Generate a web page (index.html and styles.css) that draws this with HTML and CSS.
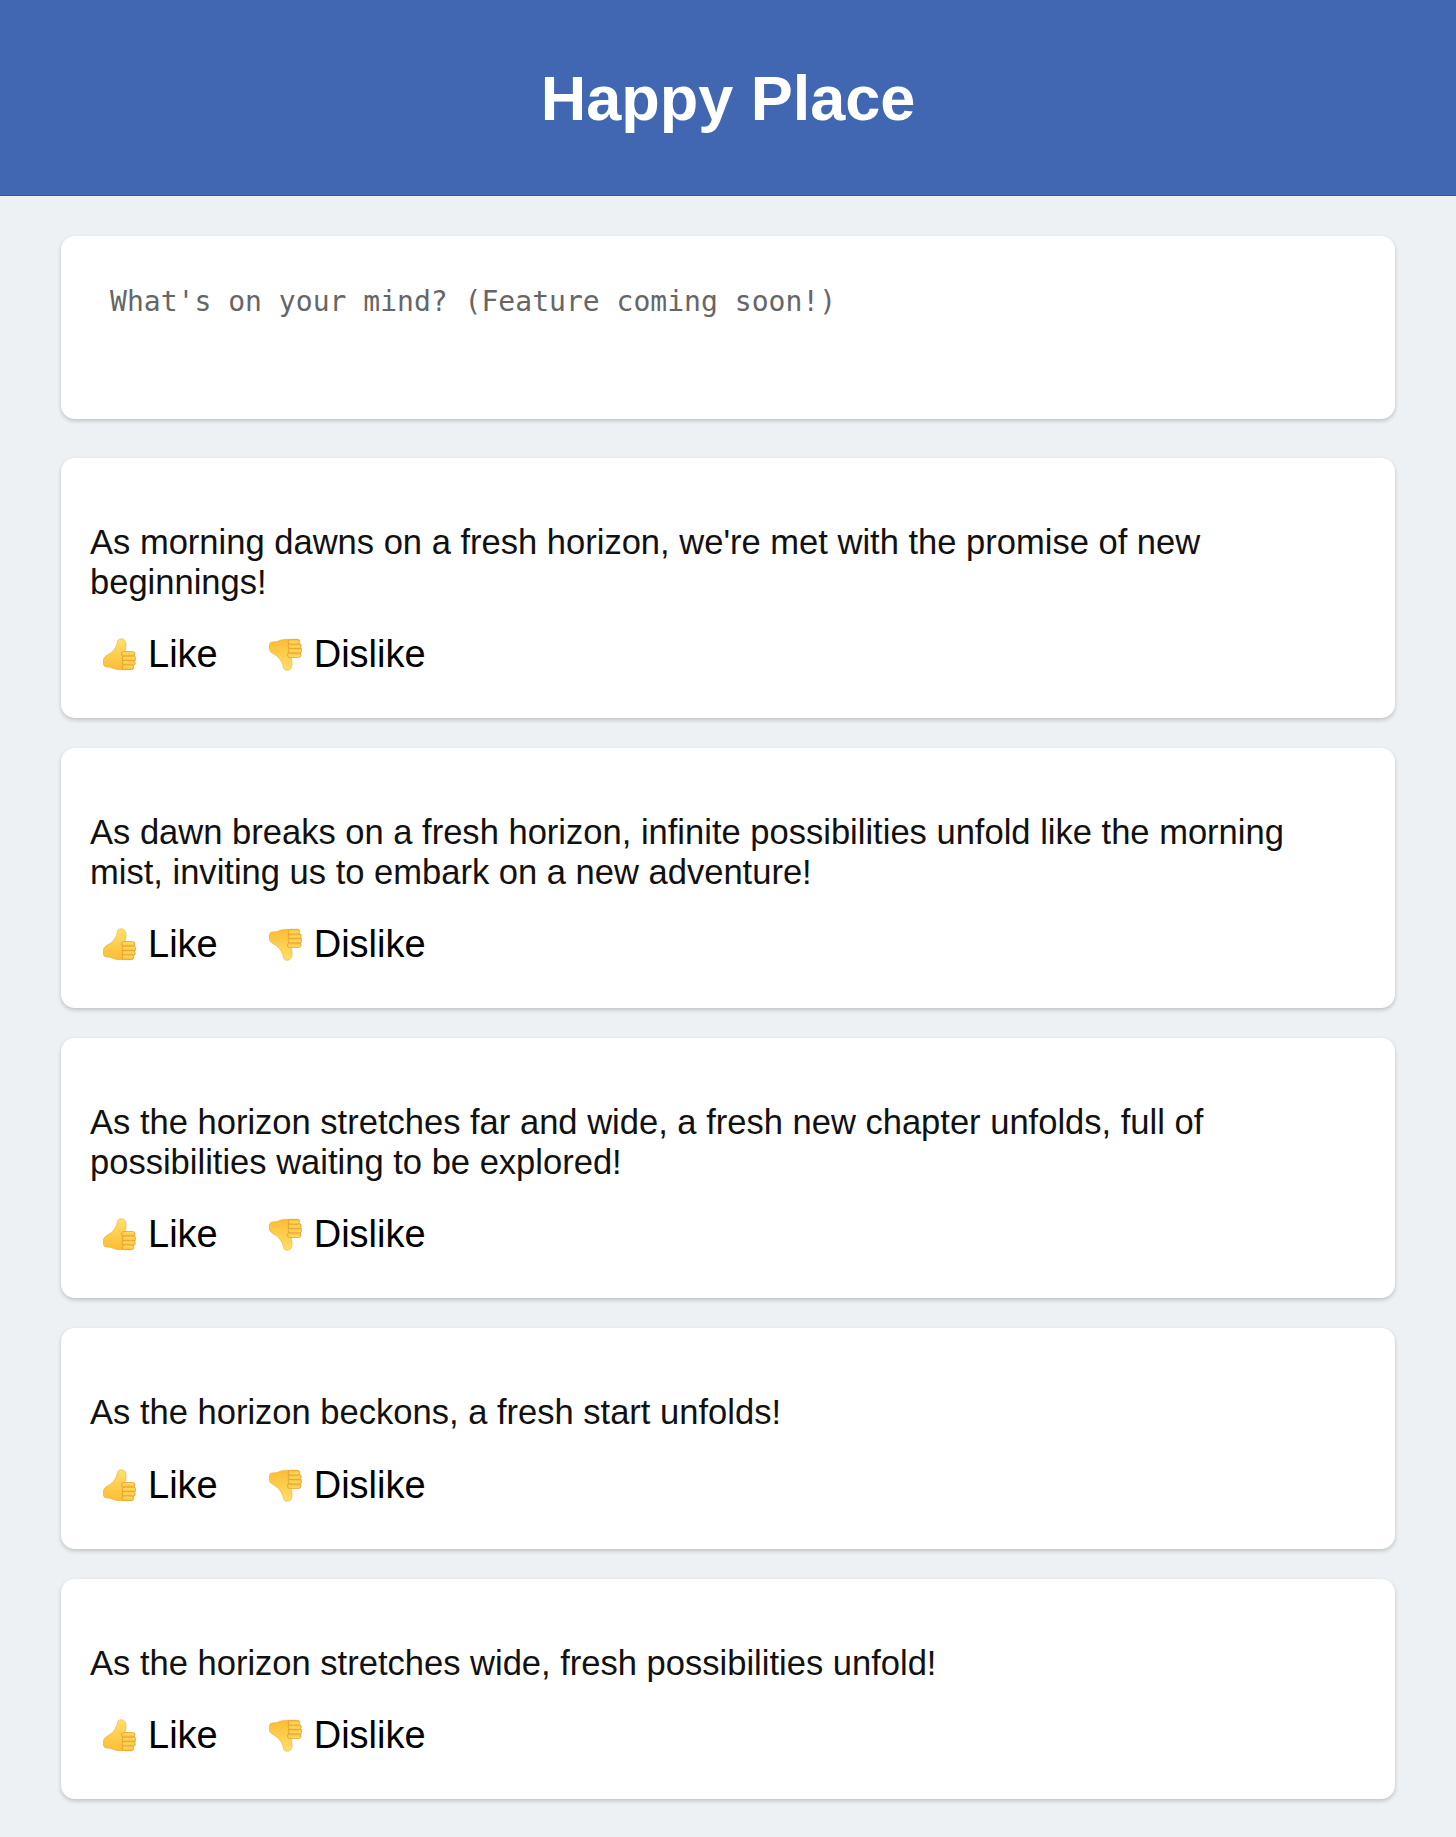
FILE: index.html
```html
<!DOCTYPE html>
<html lang="en">
<head>
    <meta charset="UTF-8">
    <meta name="viewport" content="width=device-width, initial-scale=1.0">
    <title>Happy Place</title>
    <link rel="stylesheet" href="styles.css">
</head>
<body>
    <svg class="sprite" width="0" height="0" aria-hidden="true">
        <defs>
            <linearGradient id="thumbFill" x1="0" y1="0" x2="0" y2="1">
                <stop offset="0" stop-color="#ffe06a"/>
                <stop offset="1" stop-color="#fcbc34"/>
            </linearGradient>
            <symbol id="thumbUp" viewBox="0 0 100 96">
                <path d="M1 64C3 54 14 50 24 43 35 34 42 22 44 8 45 0 58-2 64 3 71 9 72 24 67 38L63 44 60 94C46 95 34 92 26 88 17 85 6 88 3 82-1 76-1 70 1 64z" fill="url(#thumbFill)" stroke="#e9a022" stroke-width="1.500"/>
                <rect x="56" y="39" width="41" height="15" rx="7.500" fill="url(#thumbFill)" stroke="#dd8f1a" stroke-width="2"/>
                <rect x="58" y="53" width="42" height="15" rx="7.500" fill="url(#thumbFill)" stroke="#dd8f1a" stroke-width="2"/>
                <rect x="58" y="67" width="40" height="14" rx="7" fill="url(#thumbFill)" stroke="#dd8f1a" stroke-width="2"/>
                <rect x="58" y="80" width="35" height="14" rx="7" fill="url(#thumbFill)" stroke="#dd8f1a" stroke-width="2"/>
            </symbol>
        </defs>
    </svg>

    <header class="site-header">
        <h1>Happy Place</h1>
    </header>

    <main class="feed">
        <div class="card composer">
            <div class="composer-text">What's on your mind? (Feature coming soon!)</div>
        </div>

        <div class="card post">
            <p>As morning dawns on a fresh horizon, we're met with the promise of new beginnings!</p>
            <div class="actions">
                <button><svg class="thumb"><use href="#thumbUp"/></svg> Like</button>
                <button><svg class="thumb down"><use href="#thumbUp"/></svg> Dislike</button>
            </div>
        </div>

        <div class="card post">
            <p>As dawn breaks on a fresh horizon, infinite possibilities unfold like the morning mist, inviting us to embark on a new adventure!</p>
            <div class="actions">
                <button><svg class="thumb"><use href="#thumbUp"/></svg> Like</button>
                <button><svg class="thumb down"><use href="#thumbUp"/></svg> Dislike</button>
            </div>
        </div>

        <div class="card post">
            <p>As the horizon stretches far and wide, a fresh new chapter unfolds, full of possibilities waiting to be explored!</p>
            <div class="actions">
                <button><svg class="thumb"><use href="#thumbUp"/></svg> Like</button>
                <button><svg class="thumb down"><use href="#thumbUp"/></svg> Dislike</button>
            </div>
        </div>

        <div class="card post">
            <p>As the horizon beckons, a fresh start unfolds!</p>
            <div class="actions">
                <button><svg class="thumb"><use href="#thumbUp"/></svg> Like</button>
                <button><svg class="thumb down"><use href="#thumbUp"/></svg> Dislike</button>
            </div>
        </div>

        <div class="card post">
            <p>As the horizon stretches wide, fresh possibilities unfold!</p>
            <div class="actions">
                <button><svg class="thumb"><use href="#thumbUp"/></svg> Like</button>
                <button><svg class="thumb down"><use href="#thumbUp"/></svg> Dislike</button>
            </div>
        </div>
    </main>
</body>
</html>
```

FILE: styles.css
```css
body {
    background-color: #eef1f4;
    color: #111;
    font-family: "Liberation Sans", Arial, sans-serif;
    margin: 0;
}
.sprite {
    display: block;
    height: 0;
}
.site-header {
    background-color: #4267b2;
    border-bottom: 1px solid #2f55a3;
    box-sizing: border-box;
    height: 196px;
    display: flex;
    justify-content: center;
    align-items: center;
}
.site-header h1 {
    color: #ffffff;
    font-size: 63px;
    font-weight: bold;
    margin: 0;
}
.feed {
    padding: 40px 61px 38px;
    display: flex;
    flex-direction: column;
    gap: 30px;
}
.card {
    background-color: #ffffff;
    border-radius: 14px;
    box-shadow: 0 2px 4px rgba(0, 0, 0, 0.2);
}
.composer {
    height: 183px;
    padding: 49px 49px;
    box-sizing: border-box;
    margin-bottom: 9px;
}
.composer-text {
    color: #666;
    font-family: "DejaVu Sans Mono", monospace;
    font-size: 28.050px;
}
.post {
    padding: 65px 30px 42px 29px;
}
.post p {
    font-size: 34.540px;
    line-height: 39.500px;
    margin: 0 0 31px;
}
.actions {
    display: flex;
    gap: 27px;
    margin-left: 1px;
}
.actions button {
    background: none;
    border: none;
    color: #000;
    font-family: inherit;
    font-size: 38px;
    padding: 0 12px;
    display: flex;
    align-items: center;
    gap: 12px;
}
.thumb {
    width: 33px;
    height: 33px;
}
.thumb.down {
    transform: scaleY(-1);
}
```
